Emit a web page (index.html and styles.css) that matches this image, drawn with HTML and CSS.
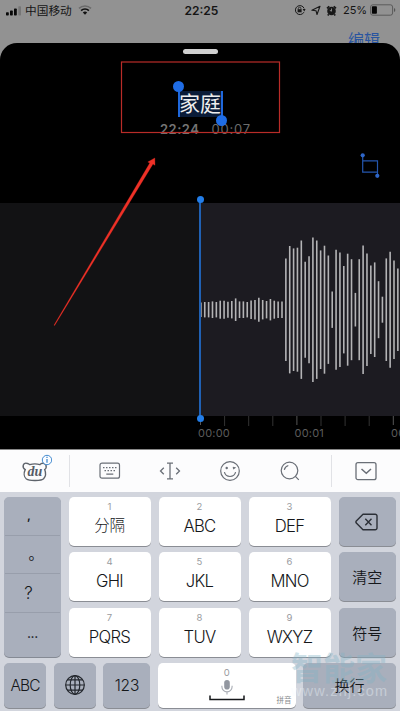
FILE: index.html
```html
<!DOCTYPE html>
<html lang="zh-CN">
<head>
<meta charset="utf-8">
<meta name="viewport" content="width=device-width, initial-scale=1">
<title>语音备忘录</title>
<link rel="stylesheet" href="styles.css">
</head>
<body>
<main class="phone">
  <header class="backdrop">
    <div class="status">
      <div class="status-left">
        <svg class="signal" width="16" height="10" viewBox="0 0 16 10"><rect x="0" y="6.2" width="2.8" height="3.3" rx=".7"/><rect x="4" y="4.6" width="2.8" height="4.9" rx=".7"/><rect x="8" y="2.6" width="2.8" height="6.9" rx=".7"/><rect x="12.3" y=".3" width="2.7" height="9.2" rx=".7" opacity=".2"/></svg>
        <span class="carrier">中国移动</span>
        <svg class="wifi" width="14" height="10" viewBox="0 0 14 10" fill="none" stroke="#111"><path d="M1 3.4a8.6 8.6 0 0 1 12 0" stroke-width="1.5" opacity=".3"/><path d="M3.1 5.6a5.6 5.6 0 0 1 7.8 0" stroke-width="1.7"/><path d="M7 9.7 4.8 7.5a3.1 3.1 0 0 1 4.4 0z" fill="#111" stroke="none"/></svg>
      </div>
      <span class="clock">22:25</span>
      <div class="status-right">
        <svg width="12" height="12" viewBox="0 0 12 12" fill="none" stroke="#181818"><path d="M9.9 8.2A4.5 4.5 0 1 1 10.1 4.4" stroke-width="1"/><path d="M8.6 5.1h3L10.3 7.6z" fill="#181818" stroke="none"/><path d="M4.3 5.4V4.5a1.3 1.3 0 0 1 2.6 0v.9" stroke-width=".8"/><rect x="3.6" y="5.2" width="4" height="3.1" fill="#181818" stroke="none"/></svg>
        <svg width="10" height="11" viewBox="0 0 10 11" fill="none" stroke="#181818" stroke-width="1.1" stroke-linejoin="round"><path d="M9 1.2 6 9.5 5 5.7.9 5.2z"/></svg>
        <svg width="11" height="11" viewBox="0 0 11 11"><circle cx="5.5" cy="6" r="4.3" fill="#181818"/><path d="M1 3.4 3.2 1.2M7.8 1.2 10 3.4M2.7 9.3 1.8 10.5M8.3 9.3l.9 1.2" stroke="#181818" stroke-width="1.6"/><path d="M5.5 3.5v2.7L3.8 5.3" fill="none" stroke="#929292" stroke-width=".9"/></svg>
        <span class="percent">25%</span>
        <svg width="26" height="12" viewBox="0 0 26 12"><rect x=".6" y=".8" width="22" height="10.4" rx="2.2" fill="none" stroke="#555" stroke-width=".9"/><rect x="1.9" y="2.2" width="5" height="7.6" rx=".8" fill="#050505"/><path d="M24 4v4q1.3-.6 1.3-2T24 4z" fill="#555"/></svg>
      </div>
    </div>
    <div class="edit">编辑</div>
  </header>

  <section class="sheet">
    <div class="grabber"></div>
    <div class="title-row">
      <div class="name">家庭<i class="handle start"></i><i class="handle end"></i></div>
    </div>
    <div class="meta"><span class="time">22:24</span><span class="length">00:07</span></div>
    <div class="trim">
      <svg width="22" height="26" viewBox="0 0 22 26" fill="none" stroke="#2456ae" stroke-width="1.2"><path d="M3.7 3v17.2h15M3.7 8.8h14.8v15"/><circle cx="3.7" cy="3.3" r="2.1" fill="#2e66c8" stroke="none"/><circle cx="18.3" cy="23.8" r="2.1" fill="#2e66c8" stroke="none"/></svg>
    </div>
    <div class="recording">
      <div class="before"></div>
      <svg class="wave" id="wave" width="200" height="213" viewBox="0 0 200 213"></svg>
      <div class="playhead"></div>
    </div>
    <div class="ruler">
      <svg id="ticks" width="200" height="11" viewBox="0 0 200 11"></svg>
      <div class="labels"><span>00:00</span><span>00:01</span><span>00:02</span></div>
    </div>
  </section>

  <nav class="tools">
    <svg class="bear" width="32" height="34" viewBox="0 0 32 34" fill="none" stroke="#5e636b" stroke-width="1.4"><path d="M5.2 17.6C1.6 15.4 3.1 10.8 6.5 11.2c1.9.1 2.2 1.1 3.2 1.4 3.8-1.1 6.6-1.1 10.2 0 1.5-1.8 5.3-1.8 6.1.7.5 1.7-.1 3.4-1.3 4.2 1.3 3.4.9 7.2-1.1 9.2-2.1 2.2-13.9 2.5-17.2.3-2.6-2-2.7-6.2-1.2-9.4z"/><text x="14.8" y="24" class="du">du</text><circle cx="27" cy="8" r="4.7" fill="#fcfdff" stroke="#438bd0" stroke-width="1"/><path d="M27 7v3.8M27 4.7v1.2" stroke="#438bd0" stroke-width="1.3"/></svg>
    <i class="split first"></i>
    <svg class="t-board" width="22" height="18" viewBox="0 0 22 18" fill="none" stroke="#6a6f77" stroke-width="1.2"><rect x="1" y="1.2" width="19.5" height="15" rx="2"/><path d="M4 5.6h1.5M7 5.6h1.5M10 5.6h1.5M13 5.6h1.5M16 5.6h1.5M5.5 8.7H7M8.5 8.7H10M11.5 8.7H13M14.5 8.7H16M7.3 12.2h7"/></svg>
    <svg class="t-cursor" width="22" height="20" viewBox="0 0 22 20" fill="none" stroke="#6a6f77" stroke-width="1.3"><path d="M4.8 6.7 1.5 10l3.3 3.3M17.2 6.7l3.3 3.3-3.3 3.3M11 2.2v15.6M8 2.2h6M8 17.8h6"/></svg>
    <svg class="t-smile" width="22" height="22" viewBox="0 0 22 22" fill="none" stroke="#6a6f77" stroke-width="1.2"><circle cx="11" cy="11" r="9.3"/><path d="M5.4 12.2a5.8 5.8 0 0 0 11.2 0M13.8 7.2l2 .6-1.7 1.1"/><circle cx="7.7" cy="8" r=".6" fill="#6a6f77"/></svg>
    <svg class="t-search" width="22" height="22" viewBox="0 0 22 22" fill="none" stroke="#6a6f77" stroke-width="1.2"><circle cx="10.5" cy="10.5" r="8.3"/><path d="M16.4 16.3l3.4 3.5M5.3 9.8c.5-2.2 1.8-3.6 4-4.3"/></svg>
    <i class="split second"></i>
    <svg class="t-hide" width="22" height="20" viewBox="0 0 22 20" fill="none" stroke="#6a6f77" stroke-width="1.3"><rect x="1" y="1.7" width="20" height="17" rx="2"/><path d="M6.5 8l4.8 4.3L16 8" stroke-width="1.5"/></svg>
  </nav>

  <section class="keyboard">
    <div class="keys">
      <div class="punct"><span class="comma">,</span><span class="stop">。</span><span class="ask">?</span><span class="more">...</span></div>
      <div class="pad">
        <button><small>1</small><b class="cjk">分隔</b></button><button><small>2</small><b>ABC</b></button><button><small>3</small><b>DEF</b></button>
        <button><small>4</small><b>GHI</b></button><button><small>5</small><b>JKL</b></button><button><small>6</small><b>MNO</b></button>
        <button><small>7</small><b>PQRS</b></button><button><small>8</small><b>TUV</b></button><button><small>9</small><b>WXYZ</b></button>
      </div>
      <div class="side">
        <button><svg width="24" height="18" viewBox="0 0 24 18" fill="none" stroke="#2b2f36" stroke-width="1.4" stroke-linejoin="round"><path d="M8 1.2h12.2a1.8 1.8 0 0 1 1.8 1.8v12a1.8 1.8 0 0 1-1.8 1.8H8L1.3 10.1q-.8-1.1 0-2.2z"/><path d="M10.3 5.8l6.2 6.4M16.5 5.8l-6.2 6.4"/></svg></button>
        <button>清空</button>
        <button>符号</button>
      </div>
    </div>
    <div class="bottom">
      <button class="grey abc">ABC</button>
      <button class="grey"><svg width="22" height="22" viewBox="0 0 22 22" fill="none" stroke="#22262c" stroke-width="1.2"><circle cx="11" cy="11" r="9.3"/><ellipse cx="11" cy="11" rx="4.8" ry="9.3"/><path d="M11 1.7v18.6M1.7 11h18.6M3.4 5.8h15.2M3.4 16.2h15.2"/></svg></button>
      <button class="grey num">123</button>
      <button class="space"><small>0</small>
        <svg width="36" height="22" viewBox="0 0 36 22" fill="none"><rect x="15.2" y="0" width="5.6" height="9.5" rx="2.8" fill="#9297a0"/><path d="M12.9 5.8v1a5.1 5.1 0 0 0 10.2 0v-1M18 12v2.5" stroke="#a8acb4" stroke-width="1.1"/><path d="M1 15.5v4h34v-4" stroke="#15171a" stroke-width="1.5"/></svg>
        <em>拼音</em></button>
      <button class="grey enter">换行</button>
    </div>
  </section>

  <svg class="notes" width="400" height="711" viewBox="0 0 400 711"><rect x="121.5" y="62" width="158" height="70.5" fill="none" stroke="#b92c28" stroke-width="1.2"/><path d="M54 325.2 54.6 325.4 153 164 155 165.3 154.8 158 147.8 162 149.8 163z" fill="#ee3127" stroke="#ee3127" stroke-width=".3"/></svg>
  <div class="watermark"><strong>智能家</strong><span>www.znj.com</span></div>
</main>
<script src="app.js"></script>
</body>
</html>
```
FILE: styles.css
```css
* { box-sizing: border-box; }
body { margin: 0; background: #000; font-family: Inter, "Noto Sans CJK SC", sans-serif; }
.phone { position: relative; width: 400px; height: 711px; overflow: hidden; background: #000; display: flex; flex-direction: column; }
svg { display: block; flex: none; }

.backdrop { height: 60px; flex: none; background: #929292; }
.status { height: 20px; display: grid; grid-template-columns: 1fr auto 1fr; align-items: center; padding: 0 4px 0 6px; color: #151515; }
.status-left, .status-right { display: flex; align-items: center; }
.signal { fill: #080808; margin-top: 2px; }
.carrier { font: 400 11.7px/20px "Noto Sans CJK SC", sans-serif; margin-left: 3px; }
.wifi { margin-left: 6px; }
.clock { font-size: 12px; font-weight: 600; letter-spacing: 0; padding-left: 1px; }
.status-right { justify-content: flex-end; gap: 5px; }
.percent { font-size: 11px; letter-spacing: -.1px; margin: 0 -2px 0 1px; }
.edit { margin: 7px 20px 0 0; text-align: right; color: #2955a0; font: 400 16px/24px "Noto Sans CJK SC", sans-serif; }

.sheet { height: 406px; flex: none; margin-top: -17px; background: #000; border-radius: 17px 17px 0 0; display: flex; flex-direction: column; position: relative; }
.grabber { width: 35px; height: 5px; border-radius: 3px; background: #d0d0d0; margin: 6px auto 0 183px; flex: none; }
.title-row { display: flex; justify-content: center; margin-top: 37px; height: 26px; }
.name { position: relative; height: 26px; width: 43px; background: #0b1c38; color: #eee; font: 400 21px/23px "Noto Sans CJK SC", sans-serif; text-align: center; white-space: nowrap; }
.handle { position: absolute; width: 2px; background: #1f68dc; }
.handle::after { content: ""; position: absolute; width: 11px; height: 11px; border-radius: 50%; background: #1f6ce4; left: -4.5px; }
.start { left: -1px; top: -6px; height: 32px; }
.start::after { top: -4px; }
.end { right: -1px; top: 0; height: 31px; }
.end::after { bottom: -4px; }
.meta { display: flex; gap: 12px; margin: 3px 0 0 160px; height: 18px; line-height: 18px; font-size: 13px; color: #7b7b7b; }
.time { font-weight: 600; letter-spacing: .5px; color: #747474; }
.length { letter-spacing: .8px; color: #6c6c6c; }
.trim { display: flex; justify-content: flex-end; padding-right: 19px; height: 65px; padding-top: 14px; }
.recording { position: relative; display: flex; height: 213px; flex: none; }
.before { width: 200px; background: #121214; }
.wave { background: #1c1b21; }
.playhead { position: absolute; left: 199px; top: -4px; width: 2px; height: 220px; background: #2061b4; }
.playhead::before, .playhead::after { content: ""; position: absolute; left: -2.5px; width: 7px; height: 7px; border-radius: 50%; background: #237ee9; }
.playhead::before { top: -3px; }
.playhead::after { bottom: -3px; }
.ruler { padding-left: 200px; overflow: hidden; }
.labels { display: flex; margin-left: -2px; height: 15px; font-size: 11px; line-height: 13px; letter-spacing: .2px; color: #5c5c5c; }
.labels span { width: 96.5px; flex: none; }

.tools { height: 43px; flex: none; background: #fcfcfd; border-top: 1px solid #888; display: flex; align-items: center; }
.bear { margin: -4px 0 0 20px; }
.du { font: italic 700 14px "Liberation Serif", serif; fill: #555b66; stroke: none; text-anchor: middle; }
.split { width: 1px; height: 32px; background: #e1e2e6; }
.first { margin-left: 17px; }
.t-board { margin-left: 29px; }
.t-cursor { margin-left: 38px; }
.t-smile { margin-left: 38px; }
.t-search { margin-left: 38px; }
.second { margin-left: 30px; }
.t-hide { margin-left: 23px; }

.keyboard { flex: 1; background: #d2d5dd; padding: 5px 4px 3px; display: flex; flex-direction: column; gap: 6px; }
.keys { display: flex; height: 160px; }
button { border: 0; padding: 0; margin: 0; font: inherit; color: #15171a; border-radius: 5px; display: flex; flex-direction: column; align-items: center; box-shadow: 0 1px 0 #8a8d94; }
.punct { width: 57px; height: 160px; background: #a9afbc; border-radius: 5px; box-shadow: 0 1px 0 #858a94; display: grid; grid-template-rows: 39px 38px 39px 44px; color: #15171a; }
.punct span { margin: 0 1px; border-bottom: 1px solid #989eab; padding-right: 7px; display: flex; justify-content: center; align-items: center; font-size: 16px; }
.punct .comma { font-weight: 600; font-size: 12px; padding-bottom: 1px; }
.punct .stop { font: 400 15px/20px "Noto Sans CJK SC", sans-serif; padding: 0 0 3px 7px; }
.punct .ask { font-size: 17px; font-weight: 300; padding-right: 8px; }
.punct .more { border: 0; font-size: 14px; padding: 0 0 5px; letter-spacing: -.3px; }
.pad { margin-left: 7.5px; width: 262px; display: grid; grid-template-columns: repeat(3, 82px); column-gap: 8px; grid-auto-rows: 49px; row-gap: 6.3px; }
.pad button, .space { background: #fff; }
small { font-size: 9.5px; font-weight: 400; line-height: 12px; color: #999ba0; margin-top: 4px; }
.pad b { font-size: 16.7px; font-weight: 350; line-height: 20px; letter-spacing: -.75px; margin-top: 3px; }
.pad .cjk { font: 300 15.5px/20px "Noto Sans CJK SC", sans-serif; letter-spacing: -.3px; margin-top: 1px; }
.side { margin-left: 8px; width: 57.5px; display: grid; grid-auto-rows: 49px; row-gap: 6.3px; }
.side button { background: #a9afbc; justify-content: center; font: 350 15px/20px "Noto Sans CJK SC", sans-serif; }
.side button:not(:first-child) { padding-top: 1px; }
.bottom { display: grid; grid-template-columns: 42px 42px 47px 137.5px 92.5px; column-gap: 7.7px; height: 44.5px; }
.grey { background: #a9afbc; justify-content: center; }
.abc, .num { font-size: 15.5px; font-weight: 350; letter-spacing: -.9px; padding-top: 1px; }
.num { letter-spacing: -.2px; }
.enter { font: 350 15px/20px "Noto Sans CJK SC", sans-serif; }
.space { position: relative; }
.space svg { margin-top: 1px; }
.space em { position: absolute; right: 4px; bottom: 2px; font: 400 7.5px/12px "Noto Sans CJK SC", sans-serif; color: #8a8c90; }

.notes { position: absolute; left: 0; top: 0; }
.watermark { position: absolute; left: 291px; top: 649px; width: 109px; color: #84b4c6; opacity: .38; display: flex; flex-direction: column; }
.watermark strong { font: 700 32px/34px "Noto Sans CJK SC", sans-serif; }
.watermark span { font: 400 14.5px/17px "Liberation Sans", sans-serif; color: #f4fbff; letter-spacing: 1.15px; }
```
FILE: app.js
```js
const NS = "http://www.w3.org/2000/svg";
const levels = [7.3, 7.7, 7.7, 8.3, 7.7, 9, 9, 8, 8.7, 11.3, 8.3, 8.3, 7.7, 9.3, 9.7, 12, 9.7, 8.7, 10.7, 9, 8.3, 8.3,
  51.3, 63.7, 61.3, 62, 69.2, 48, 53.5, 72.2, 69.2, 59.3, 64, 54.2, 18.2, 60, 57.3, 43.7, 56, 50.5, 16.8, 50.5,
  64.2, 56.3, 44.2, 47.3, 28.5, 13, 51.3, 58, 49.3, 41.2];

function line(parent, x, y1, y2, width, color) {
  const el = document.createElementNS(NS, "line");
  const attrs = { x1: x, x2: x, y1, y2, "stroke-width": width, stroke: color };
  for (const key in attrs) el.setAttribute(key, attrs[key]);
  parent.appendChild(el);
}

const wave = document.getElementById("wave");
levels.forEach((h, i) => line(wave, 0.9 + i * 3.862, 106.7 - h, 106.7 + h, 1.6, "#b4b4b6"));

const ticks = document.getElementById("ticks");
for (let i = 0; i < 9; i++) line(ticks, 0.5 + i * 24.1, 0, i % 4 ? 10 : 9, 1, i % 4 ? "#333" : "#555");
```
